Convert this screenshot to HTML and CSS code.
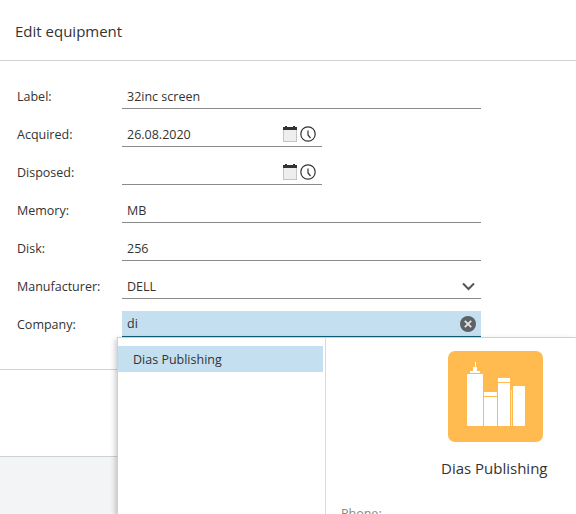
FILE: index.html
```html
<!DOCTYPE html>
<html>
<head>
    <title>Edit equipment</title>
    <link rel="stylesheet" href="styles.css">
</head>
<body>
    <div class="dialog">
        <div class="title">Edit equipment</div>

        <div class="form">
            <div class="row">
                <label>Label:</label>
                <div class="field">32inc screen</div>
            </div>
            <div class="row">
                <label>Acquired:</label>
                <div class="field date">
                    <span>26.08.2020</span>
                    <span class="icons">
                        <svg width="15" height="16" viewBox="0 0 15 16"><rect x="0.5" y="3.5" width="13" height="12" fill="#eeeeee" stroke="#c4c4c4"/><rect x="0" y="1" width="14" height="3" fill="#333"/><rect x="2" y="0" width="2" height="2" fill="#333"/><rect x="10" y="0" width="2" height="2" fill="#333"/></svg>
                        <svg width="16" height="16" viewBox="0 0 16 16"><circle cx="8" cy="8" r="7.2" fill="none" stroke="#333" stroke-width="1.2"/><path d="M8 4.5 L8 9 L10.5 12" fill="none" stroke="#333" stroke-width="1.2"/></svg>
                    </span>
                </div>
            </div>
            <div class="row">
                <label>Disposed:</label>
                <div class="field date">
                    <span></span>
                    <span class="icons">
                        <svg width="15" height="16" viewBox="0 0 15 16"><rect x="0.5" y="3.5" width="13" height="12" fill="#eeeeee" stroke="#c4c4c4"/><rect x="0" y="1" width="14" height="3" fill="#333"/><rect x="2" y="0" width="2" height="2" fill="#333"/><rect x="10" y="0" width="2" height="2" fill="#333"/></svg>
                        <svg width="16" height="16" viewBox="0 0 16 16"><circle cx="8" cy="8" r="7.2" fill="none" stroke="#333" stroke-width="1.2"/><path d="M8 4.5 L8 9 L10.5 12" fill="none" stroke="#333" stroke-width="1.2"/></svg>
                    </span>
                </div>
            </div>
            <div class="row">
                <label>Memory:</label>
                <div class="field">MB</div>
            </div>
            <div class="row">
                <label>Disk:</label>
                <div class="field">256</div>
            </div>
            <div class="row">
                <label>Manufacturer:</label>
                <div class="field select">
                    <span>DELL</span>
                    <svg width="14" height="9" viewBox="0 0 14 9"><path d="M1 1.5 L6.5 7 L12 1.5" fill="none" stroke="#555" stroke-width="2"/></svg>
                </div>
            </div>
            <div class="row">
                <label>Company:</label>
                <div class="field active">
                    <span>di</span>
                    <svg width="16" height="16" viewBox="0 0 16 16"><circle cx="8" cy="8" r="8" fill="#5f6264"/><path d="M4.8 4.8 L11.2 11.2 M11.2 4.8 L4.8 11.2" stroke="#e4e6e7" stroke-width="1.8"/></svg>
                </div>
            </div>
        </div>

        <div class="actions"></div>
    </div>

    <div class="popup">
        <div class="results">
            <div class="result">Dias Publishing</div>
        </div>
        <div class="details">
            <div class="logo">
                <svg width="95" height="91" viewBox="0 0 95 91">
                    <rect x="27" y="11" width="1" height="5" fill="#fff"/>
                    <rect x="25" y="16" width="4" height="4" fill="#fff"/>
                    <rect x="22" y="20" width="10" height="2" fill="#fff"/>
                    <rect x="19" y="23" width="16" height="52" rx="1" fill="#fff"/>
                    <rect x="36" y="41" width="13" height="4" fill="#fff"/>
                    <rect x="36" y="46" width="13" height="29" fill="#fff"/>
                    <rect x="50" y="27" width="12" height="4" fill="#fff"/>
                    <rect x="50" y="32" width="12" height="43" fill="#fff"/>
                    <rect x="63" y="39" width="1" height="36" fill="#ffe4b5"/>
                    <rect x="65" y="35" width="12" height="40" rx="1" fill="#fff"/>
                </svg>
            </div>
            <div class="company">Dias Publishing</div>
            <div class="phone">Phone:</div>
        </div>
    </div>
</body>
</html>
```

FILE: styles.css
```css
html, body { margin: 0; height: 514px; overflow: hidden; }
body { font-family: "Open Sans", "Noto Sans", sans-serif; font-size: 12.5px; color: #333; background-color: #f3f4f6; position: relative; }
.dialog { background-color: white; height: 457px; box-sizing: border-box; border-bottom: 1px solid #cdd2d4; }
.title { height: 60px; line-height: 63px; padding-left: 15px; font-size: 15px; border-bottom: 1px solid #cdd2d4; }
.form { height: 309px; box-sizing: border-box; padding: 10px 95px 0 17px; border-bottom: 1px solid #cdd2d4; }
.row { display: flex; align-items: flex-end; height: 38px; }
.row label { width: 105px; line-height: 25px; }
.field { flex: 1; display: flex; align-items: center; justify-content: space-between; height: 25px; box-sizing: border-box; padding: 0 5px; border-bottom: 1px solid #8a8a8a; }
.date { flex: none; width: 200px; padding-right: 6px; }
.icons { display: flex; gap: 2px; }
.active { height: 26px; background-color: #c3dff0; border-bottom-color: #0f5e78; }
.popup { position: absolute; left: 117px; top: 337px; width: 459px; height: 177px; display: flex; background-color: white; border-top: 1px solid #cdd2d4; border-left: 1px solid #cdd2d4; box-shadow: -2px 2px 5px rgba(0, 0, 0, 0.2); box-sizing: border-box; }
.results { width: 208px; box-sizing: border-box; padding-top: 8px; border-right: 1px solid #d8dadb; }
.result { width: 205px; height: 26px; line-height: 27px; padding-left: 15px; box-sizing: border-box; background-color: #c3dff0; }
.details { flex: 1; display: flex; flex-direction: column; padding: 13px 0 0 15px; }
.logo { width: 95px; height: 91px; margin-left: 107px; background-color: #ffbb50; border-radius: 7px; }
.company { font-size: 15px; line-height: 20px; margin: 16px 0 0 100px; }
.phone { margin-top: 27px; color: #888; }
```
